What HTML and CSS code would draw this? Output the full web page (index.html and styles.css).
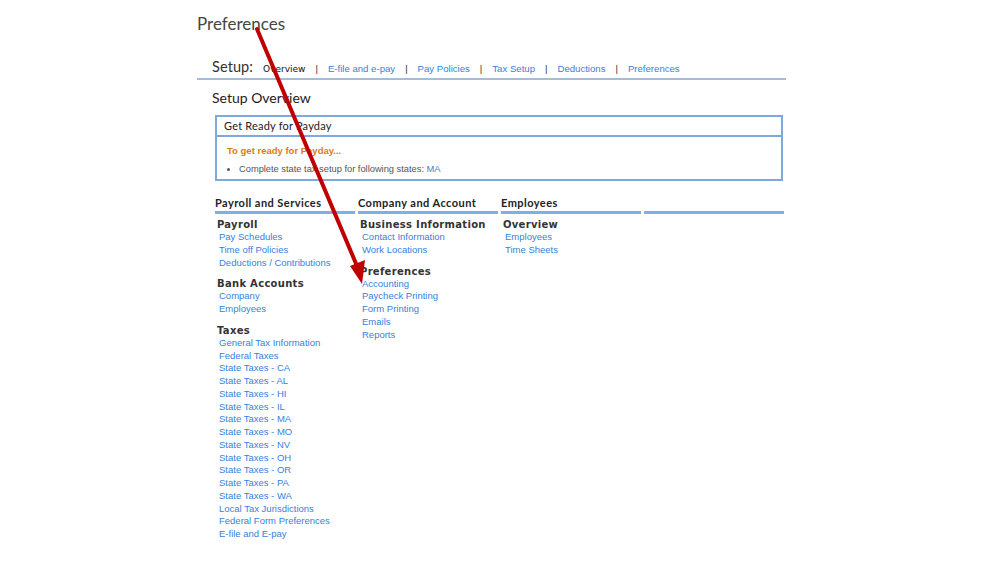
FILE: index.html
```html
<!DOCTYPE html>
<html>
<head>
<meta charset="utf-8">
<link rel="stylesheet" href="styles.css">
</head>
<body>
<div class="page">
  <h1 class="title">Preferences</h1>
  <div class="setup-bar">
    <span class="setup-label">Setup:</span>
    <span class="tab current">Overview</span>
    <span class="sep">|</span>
    <a class="tab">E-file and e-pay</a>
    <span class="sep">|</span>
    <a class="tab">Pay Policies</a>
    <span class="sep">|</span>
    <a class="tab">Tax Setup</a>
    <span class="sep">|</span>
    <a class="tab">Deductions</a>
    <span class="sep">|</span>
    <a class="tab">Preferences</a>
  </div>
  <h2 class="section-title">Setup Overview</h2>
  <div class="ready-box">
    <div class="ready-head">Get Ready for Payday</div>
    <div class="ready-body">
      <div class="ready-intro">To get ready for Payday...</div>
      <ul class="ready-list">
        <li>Complete state tax setup for following states: <a>MA</a></li>
      </ul>
    </div>
  </div>
  <div class="columns">
    <div class="col">
      <div class="col-head">Payroll and Services</div>
      <div class="group">
        <div class="group-title">Payroll</div>
        <a>Pay Schedules</a>
        <a>Time off Policies</a>
        <a>Deductions / Contributions</a>
      </div>
      <div class="group">
        <div class="group-title">Bank Accounts</div>
        <a>Company</a>
        <a>Employees</a>
      </div>
      <div class="group">
        <div class="group-title">Taxes</div>
        <a>General Tax Information</a>
        <a>Federal Taxes</a>
        <a>State Taxes - CA</a>
        <a>State Taxes - AL</a>
        <a>State Taxes - HI</a>
        <a>State Taxes - IL</a>
        <a>State Taxes - MA</a>
        <a>State Taxes - MO</a>
        <a>State Taxes - NV</a>
        <a>State Taxes - OH</a>
        <a>State Taxes - OR</a>
        <a>State Taxes - PA</a>
        <a>State Taxes - WA</a>
        <a>Local Tax Jurisdictions</a>
        <a>Federal Form Preferences</a>
        <a>E-file and E-pay</a>
      </div>
    </div>
    <div class="col">
      <div class="col-head">Company and Account</div>
      <div class="group">
        <div class="group-title">Business Information</div>
        <a>Contact Information</a>
        <a>Work Locations</a>
      </div>
      <div class="group">
        <div class="group-title">Preferences</div>
        <a>Accounting</a>
        <a>Paycheck Printing</a>
        <a>Form Printing</a>
        <a>Emails</a>
        <a>Reports</a>
      </div>
    </div>
    <div class="col">
      <div class="col-head">Employees</div>
      <div class="group">
        <div class="group-title">Overview</div>
        <a>Employees</a>
        <a>Time Sheets</a>
      </div>
    </div>
    <div class="col">
      <div class="col-head">&nbsp;</div>
    </div>
  </div>
</div>
<svg class="arrow" width="999" height="562" viewBox="0 0 999 562">
  <line x1="257" y1="29" x2="357" y2="266" stroke="#c00000" stroke-width="4" stroke-linecap="round"/>
  <polygon points="362,284 350,266 365,260" fill="#c00000"/>
</svg>
</body>
</html>
```
FILE: styles.css
```css
html, body {
  margin: 0;
  padding: 0;
  background: #ffffff;
}
body {
  width: 999px;
  height: 562px;
  position: relative;
  overflow: hidden;
  font-family: "Liberation Sans", Arial, sans-serif;
}
a {
  color: #3581e0;
  text-decoration: none;
}
.page {
  margin-left: 197px;
  width: 589px;
  padding-top: 13px;
}
.title {
  margin: 0;
  font-family: Lato, "Open Sans", sans-serif;
  font-weight: 400;
  font-size: 17px;
  line-height: 22px;
  height: 22px;
  color: #454545;
}
.setup-bar {
  margin-top: 21px;
  padding-left: 15px;
  padding-top: 2px;
  height: 20px;
  display: flex;
  align-items: baseline;
  border-bottom: 2px solid #a3bddb;
}
.setup-label {
  font-family: Lato, "Open Sans", sans-serif;
  font-size: 14.5px;
  line-height: 18px;
  color: #333;
  margin-right: 10px;
  letter-spacing: 0.1px;
}
.tab {
  font-size: 9.6px;
  color: #3581e0;
}
.tab.current {
  color: #111;
  font-family: "DejaVu Sans", Verdana, sans-serif;
  font-size: 9px;
}
.sep {
  color: #333;
  margin: 0 10px;
  font-size: 9.5px;
}
.section-title {
  margin: 9px 0 0 15px;
  font-family: Lato, "Open Sans", sans-serif;
  font-weight: 400;
  font-size: 14px;
  line-height: 18px;
  color: #222;
}
.ready-box {
  margin: 8px 0 0 18px;
  width: 564px;
  border: 2px solid #7ea9da;
}
.ready-head {
  height: 18px;
  line-height: 18px;
  padding-left: 7px;
  font-family: Lato, "Open Sans", sans-serif;
  font-size: 11px;
  color: #222;
  border-bottom: 2px solid #7ea9da;
  letter-spacing: 0.2px;
}
.ready-body {
  padding: 8px 0 4px 10px;
}
.ready-intro {
  color: #e07a12;
  font-weight: 700;
  font-size: 9.5px;
  line-height: 12px;
}
.ready-list {
  margin: 6px 0 0 0;
  padding-left: 12px;
  font-size: 9.3px;
  line-height: 12px;
  color: #555;
}
.columns {
  margin: 14px 0 0 18px;
  display: grid;
  grid-template-columns: 140px 140px 140px 140px;
  column-gap: 3px;
  align-items: start;
}
.col-head {
  font-family: Lato, "Open Sans", sans-serif;
  font-weight: 700;
  font-size: 11px;
  color: #222;
  height: 16px;
  line-height: 16px;
  border-bottom: 3px solid #7fb0e2;
  letter-spacing: 0.45px;
}
.group {
  display: flex;
  flex-direction: column;
  padding-left: 2px;
  margin-top: 4px;
}
.group + .group {
  margin-top: 8px;
}
.group-title {
  font-family: "DejaVu Sans", Verdana, sans-serif;
  font-weight: 700;
  font-size: 10px;
  line-height: 13px;
  color: #333;
  letter-spacing: 0.3px;
}
.group a {
  padding-left: 2px;
  font-size: 9.5px;
  line-height: 12.75px;
}
.arrow {
  position: absolute;
  left: 0;
  top: 0;
  pointer-events: none;
}
```
